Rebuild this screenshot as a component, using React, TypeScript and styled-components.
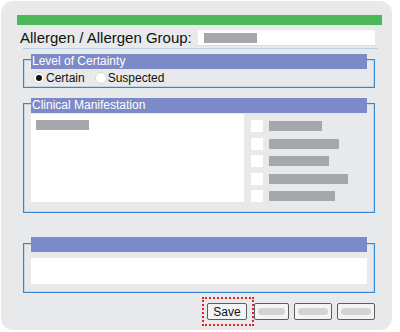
import styled, { createGlobalStyle } from "styled-components";

const GlobalStyle = createGlobalStyle`
  html, body {
    margin: 0;
    background: #ffffff;
  }
  body {
    font-family: "Liberation Sans", Arial, sans-serif;
  }
`;

const symptoms = [53, 70, 60, 79, 66];

export default function App() {
  return (
    <>
      <GlobalStyle />
      <Panel>
        <GreenBar />
        <TitleRow>
          <Label>Allergen / Allergen Group:</Label>
          <Input>
            <Placeholder $width={53} />
          </Input>
        </TitleRow>
        <Separator />

        <Fieldset $top={10}>
          <Legend>Level of Certainty</Legend>
          <RadioRow>
            <RadioOption>
              <Radio $checked />
              Certain
            </RadioOption>
            <RadioOption>
              <Radio />
              Suspected
            </RadioOption>
          </RadioRow>
        </Fieldset>

        <Fieldset $top={15}>
          <Legend>Clinical Manifestation</Legend>
          <ManifestBody>
            <ListBox>
              <Placeholder $width={53} />
            </ListBox>
            <CheckList>
              {symptoms.map((w, i) => (
                <CheckRow key={i}>
                  <CheckBox />
                  <Placeholder $width={w} />
                </CheckRow>
              ))}
            </CheckList>
          </ManifestBody>
        </Fieldset>

        <Fieldset $top={30}>
          <Legend $lift={7} />
          <NotesBody>
            <NotesBox />
          </NotesBody>
        </Fieldset>

        <ButtonRow>
          <FocusRing>
            <Button>Save</Button>
          </FocusRing>
          <Button $width={35} disabled>
            <ButtonStub />
          </Button>
          <Button $width={38} disabled>
            <ButtonStub />
          </Button>
          <Button $width={38} disabled>
            <ButtonStub />
          </Button>
        </ButtonRow>
      </Panel>
    </>
  );
}

const Panel = styled.div`
  box-sizing: border-box;
  margin: 1px 0 0 1px;
  width: 391px;
  height: 329px;
  padding-top: 14px;
  background: #e8e9eb;
  border-radius: 12px;
  display: flex;
  flex-direction: column;
`;

const GreenBar = styled.div`
  height: 10px;
  margin: 0 10px 0 16px;
  background: #4db75a;
`;

const TitleRow = styled.div`
  height: 16px;
  margin: 5px 17px 0 19px;
  display: flex;
  align-items: center;
  justify-content: space-between;
`;

const Label = styled.span`
  font-size: 15px;
  line-height: 16px;
  color: #111111;
  white-space: nowrap;
`;

const Input = styled.div`
  box-sizing: border-box;
  width: 177px;
  height: 16px;
  padding: 3px 6px;
  background: #ffffff;
  border-bottom: 1px solid #dcdde0;
`;

const Placeholder = styled.div<{ $width: number }>`
  width: ${(p) => p.$width}px;
  height: 10px;
  background: #a6a7aa;
  flex: none;
`;

const Separator = styled.div`
  height: 1px;
  margin: 2px 14px 0 22px;
  background: #b7d0e6;
`;

const Fieldset = styled.section<{ $top: number }>`
  margin: ${(p) => p.$top}px 17px 0 22px;
  border: 1px solid #3388d0;
  box-shadow: inset 0 0 0 1px rgba(150, 195, 235, 0.5);
  display: flex;
  flex-direction: column;
`;

const Legend = styled.div<{ $lift?: number }>`
  height: 15px;
  margin: -${(p) => p.$lift ?? 6}px 7px 0 7px;
  padding-left: 1px;
  background: #7c8ac7;
  color: #ffffff;
  font-size: 12px;
  line-height: 15px;
  white-space: nowrap;
`;

const RadioRow = styled.div`
  height: 18px;
  padding-left: 9px;
  display: flex;
  align-items: center;
  gap: 10px;
`;

const RadioOption = styled.label`
  display: flex;
  align-items: center;
  gap: 1px;
  font-size: 12px;
  color: #111111;
`;

const Radio = styled.span<{ $checked?: boolean }>`
  box-sizing: border-box;
  width: 12px;
  height: 12px;
  border-radius: 50%;
  background: #ffffff;
  border: 1px solid ${(p) => (p.$checked ? "#d4d4d6" : "#d9d9dc")};
  display: flex;
  align-items: center;
  justify-content: center;

  &::after {
    content: "";
    width: 6px;
    height: 6px;
    border-radius: 50%;
    background: ${(p) => (p.$checked ? "#111111" : "transparent")};
  }
`;

const ManifestBody = styled.div`
  display: flex;
  gap: 7px;
  padding: 1px 0 10px 7px;
`;

const ListBox = styled.div`
  box-sizing: border-box;
  width: 213px;
  height: 88px;
  padding: 6px 5px;
  background: #ffffff;
`;

const CheckList = styled.div`
  padding-top: 6px;
  display: flex;
  flex-direction: column;
  gap: 5.5px;
`;

const CheckRow = styled.div`
  height: 12px;
  display: flex;
  align-items: center;
  gap: 6px;
`;

const CheckBox = styled.span`
  width: 12px;
  height: 12px;
  background: #ffffff;
  flex: none;
`;

const NotesBody = styled.div`
  padding: 6px 7px 8px 7px;
`;

const NotesBox = styled.div`
  height: 26px;
  background: #ffffff;
`;

const ButtonRow = styled.div`
  margin: 4px 17px 0 0;
  display: flex;
  align-items: center;
  justify-content: flex-end;
  gap: 5px;
`;

const FocusRing = styled.div`
  box-sizing: border-box;
  width: 52px;
  height: 29px;
  margin-right: -5px;
  padding: 0 5px 0 3px;
  border: 2px dotted #e0202a;
  display: flex;
  align-items: center;
`;

const Button = styled.button<{ $width?: number }>`
  box-sizing: border-box;
  width: ${(p) => p.$width ?? 40}px;
  height: 17px;
  padding: 0 3px;
  border: 1.5px solid #5e5e60;
  border-radius: 2px;
  background: #f4f4f5;
  font-family: "Liberation Sans", Arial, sans-serif;
  font-size: 12px;
  line-height: 14px;
  color: #111111;
  display: flex;
  align-items: center;
  justify-content: center;
`;

const ButtonStub = styled.span`
  width: 100%;
  height: 7px;
  border-radius: 4px;
  background: #d3d3d5;
`;
